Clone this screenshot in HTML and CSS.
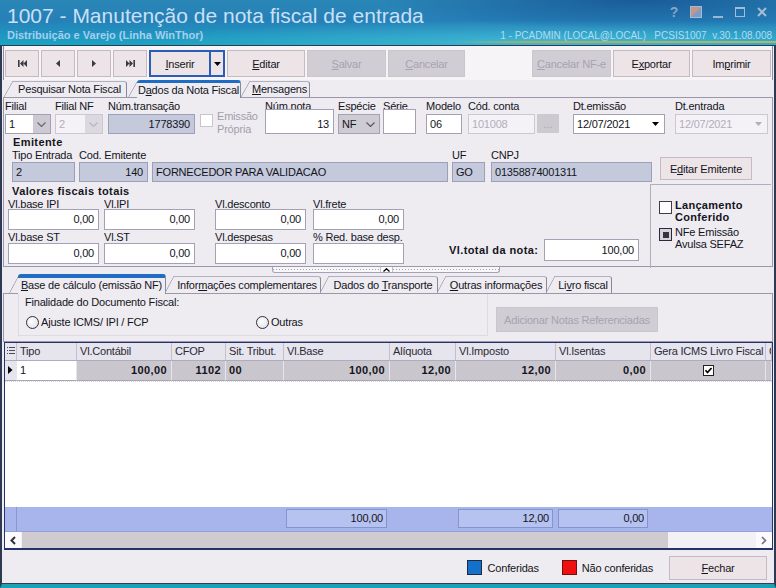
FILE: index.html
```html
<!DOCTYPE html>
<html lang="pt-BR">
<head>
  <meta charset="UTF-8" />
  <title>1007 - Manutenção de nota fiscal de entrada</title>
  <link rel="stylesheet" href="styles.css">
</head>
<body>

<div class="titlebar">
  <div class="tb-left">
    <div class="title">1007 - Manutenção de nota fiscal de entrada</div>
    <div class="subtitle">Distribuição e Varejo (Linha WinThor)</div>
  </div>
  <div class="tb-right">
    <div class="wnd">
      <span class="wnd-help">?</span>
      <svg width="12" height="12" viewBox="0 0 12 12"><rect x="0.5" y="0.5" width="11" height="11" fill="#7d9cc6" stroke="#a6bad2"/><path d="M1 1H11L1 11Z" fill="#c6968c"/></svg>
      <svg width="12" height="12" viewBox="0 0 12 12"><rect x="1" y="10" width="10" height="2" fill="#9cb6ce"/></svg>
      <svg width="12" height="12" viewBox="0 0 12 12"><rect x="1.5" y="1.5" width="9" height="9" fill="none" stroke="#a4bcd4"/><rect x="1" y="1" width="10" height="2" fill="#a4bcd4"/></svg>
      <svg width="12" height="12" viewBox="0 0 12 12"><path d="M2 2L10 10M10 2L2 10" stroke="#a4bcd4" stroke-width="2"/></svg>
    </div>
    <div class="session">1 - PCADMIN (LOCAL@LOCAL) &nbsp; PCSIS1007 &nbsp;v.30.1.08.008</div>
  </div>
</div>

<div class="window">

  <div class="toolbar">
    <div class="btn nav"><svg width="9" height="7" viewBox="0 0 9 7"><rect width="1.6" height="7"/><path d="M5.5 0V7L2 3.5ZM9 0V7L5.5 3.5Z"/></svg></div>
    <div class="btn nav"><svg width="4" height="7" viewBox="0 0 4 7"><path d="M4 0V7L0 3.5Z"/></svg></div>
    <div class="btn nav"><svg width="4" height="7" viewBox="0 0 4 7"><path d="M0 0V7L4 3.5Z"/></svg></div>
    <div class="btn nav"><svg width="9" height="7" viewBox="0 0 9 7"><path d="M0 0V7L3.5 3.5ZM3.5 0V7L7 3.5Z"/><rect x="7.4" width="1.6" height="7"/></svg></div>
    <div class="split">
      <div class="split-main"><u>I</u>nserir</div>
      <div class="split-drop"><svg width="7" height="4" viewBox="0 0 7 4"><path d="M0 0H7L3.5 4Z"/></svg></div>
    </div>
    <div class="btn w-edit"><u>E</u>ditar</div>
    <div class="btn off w-save"><u>S</u>alvar</div>
    <div class="btn off w-cancel"><u>C</u>ancelar</div>
    <div class="spacer"></div>
    <div class="btn off w-cnfe"><u>C</u>ancelar NF-e</div>
    <div class="btn w-exp">E<u>x</u>portar</div>
    <div class="btn w-print">Im<u>p</u>rimir</div>
  </div>

  <div class="tabs tabs-top">
    <div class="tab t-pesq">Pesquisar Nota Fiscal</div>
    <div class="tab active t-dados">D<u>a</u>dos da Nota Fiscal</div>
    <div class="tab t-msg"><u>M</u>ensagens</div>
  </div>

  <div class="panel p-nota">
    <div class="row r-ident">
      <div class="fld f-filial"><span class="lbl">Filial</span>
        <div class="inp sel"><span>1</span><span class="chev"><svg width="9" height="5" viewBox="0 0 9 5"><path d="M0.5 0.5L4.5 4.5L8.5 0.5" fill="none" stroke="currentColor" stroke-width="1.2"/></svg></span></div></div>
      <div class="fld f-filialnf"><span class="lbl">Filial NF</span>
        <div class="inp sel dis"><span>2</span><span class="chev"><svg width="9" height="5" viewBox="0 0 9 5"><path d="M0.5 0.5L4.5 4.5L8.5 0.5" fill="none" stroke="currentColor" stroke-width="1.2"/></svg></span></div></div>
      <div class="fld f-trans"><span class="lbl">Núm.transação</span>
        <div class="inp ro num">1778390</div></div>
      <div class="f-emissao">
        <span class="cb cb-dis"></span>
        <span class="emissao-txt">Emissão<br>Própria</span>
      </div>
      <div class="fld f-nota"><span class="lbl">Núm.nota</span>
        <div class="inp num tall">13</div></div>
      <div class="fld f-especie"><span class="lbl">Espécie</span>
        <div class="inp sel grey"><span>NF</span><span class="chev"><svg width="9" height="5" viewBox="0 0 9 5"><path d="M0.5 0.5L4.5 4.5L8.5 0.5" fill="none" stroke="currentColor" stroke-width="1.2"/></svg></span></div></div>
      <div class="fld f-serie"><span class="lbl">Série</span>
        <div class="inp tall"></div></div>
      <div class="fld f-modelo"><span class="lbl">Modelo</span>
        <div class="inp">06</div></div>
      <div class="fld f-conta"><span class="lbl">Cód. conta</span>
        <div class="inp dis">101008</div></div>
      <div class="f-dots">...</div>
      <div class="fld f-dtemi"><span class="lbl">Dt.emissão</span>
        <div class="inp date"><span>12/07/2021</span><svg width="7" height="4" viewBox="0 0 7 4"><path d="M0 0H7L3.5 4Z"/></svg></div></div>
      <div class="fld f-dtent"><span class="lbl">Dt.entrada</span>
        <div class="inp date dis"><span>12/07/2021</span><svg width="7" height="4" viewBox="0 0 7 4"><path d="M0 0H7L3.5 4Z"/></svg></div></div>
    </div>

    <div class="sec-title emit-title">Emitente</div>
    <div class="row r-emit">
      <div class="fld f-tipo"><span class="lbl">Tipo Entrada</span><div class="inp ro">2</div></div>
      <div class="fld f-cod"><span class="lbl">Cod. Emitente</span><div class="inp ro num">140</div></div>
      <div class="fld f-nome"><span class="lbl"></span><div class="inp ro">FORNECEDOR PARA VALIDACAO</div></div>
      <div class="fld f-uf"><span class="lbl">UF</span><div class="inp ro">GO</div></div>
      <div class="fld f-cnpj"><span class="lbl">CNPJ</span><div class="inp ro">01358874001311</div></div>
      <div class="btn b-emit">E<u>d</u>itar Emitente</div>
    </div>

    <div class="valores">
      <div class="val-left">
        <div class="sec-title val-title">Valores fiscais totais</div>
        <div class="row vrow">
          <div class="fld f-v1"><span class="lbl">Vl.base IPI</span><div class="inp num">0,00</div></div>
          <div class="fld f-v2"><span class="lbl">Vl.IPI</span><div class="inp num">0,00</div></div>
          <div class="fld f-v3"><span class="lbl">Vl.desconto</span><div class="inp num">0,00</div></div>
          <div class="fld f-v4"><span class="lbl">Vl.frete</span><div class="inp num">0,00</div></div>
        </div>
        <div class="row vrow vrow2">
          <div class="fld f-v1"><span class="lbl">Vl.base ST</span><div class="inp num">0,00</div></div>
          <div class="fld f-v2"><span class="lbl">Vl.ST</span><div class="inp num">0,00</div></div>
          <div class="fld f-v3"><span class="lbl">Vl.despesas</span><div class="inp num">0,00</div></div>
          <div class="fld f-v4"><span class="lbl">% Red. base desp.</span><div class="inp num"></div></div>
          <div class="total">
            <span class="total-lbl">Vl.total da nota:</span>
            <div class="inp num total-inp">100,00</div>
          </div>
        </div>
      </div>
      <div class="conf">
        <div class="chk-item bold-item"><span class="cb"></span><span>Lançamento<br>Conferido</span></div>
        <div class="chk-item"><span class="cb cb-mixed"></span><span>NFe Emissão<br>Avulsa SEFAZ</span></div>
      </div>
    </div>
  </div>

  <div class="splitter">
    <div class="grip"><span class="grip-dots"></span><span class="grip-up"><svg width="7" height="4" viewBox="0 0 7 4"><path d="M0.5 3.5L3.5 0.8L6.5 3.5" fill="none" stroke="#000" stroke-width="1.3"/></svg></span><span class="grip-dots"></span></div>
  </div>

  <div class="tabs tabs-low">
    <div class="tab active t-base"><u>B</u>ase de cálculo (emissão NF)</div>
    <div class="tab t-info">Infor<u>m</u>ações complementares</div>
    <div class="tab t-transp">Dados do <u>T</u>ransporte</div>
    <div class="tab t-outras"><u>O</u>utras informações</div>
    <div class="tab t-livro">Li<u>v</u>ro fiscal</div>
  </div>

  <div class="panel p-base">
    <div class="final">
      <div class="final-lbl">Finalidade do Documento Fiscal:</div>
      <div class="radios">
        <span class="radio r-ajuste"><span class="rdot"></span>Ajuste ICMS/ IPI / FCP</span>
        <span class="radio"><span class="rdot"></span>Outras</span>
      </div>
    </div>
    <div class="btn off b-ref">Adicionar Notas Referenciadas</div>
  </div>

  <div class="grid">
    <div class="cols gh">
      <div class="ind"><svg width="8" height="10" viewBox="0 0 8 10" fill="#4a4a5a"><rect y="1" width="1" height="1"/><rect x="2" y="1" width="6" height="1"/><rect y="4" width="1" height="1"/><rect x="2" y="4" width="6" height="1"/><rect y="7" width="1" height="1"/><rect x="2" y="7" width="6" height="1"/></svg></div>
      <div>Tipo</div>
      <div>Vl.Contábil</div>
      <div>CFOP</div>
      <div>Sit. Tribut.</div>
      <div>Vl.Base</div>
      <div>Alíquota</div>
      <div>Vl.Imposto</div>
      <div>Vl.Isentas</div>
      <div>Gera ICMS Livro Fiscal</div>
      <div>C</div>
    </div>
    <div class="cols gr">
      <div class="ind"><svg width="5" height="8" viewBox="0 0 5 8"><path d="M0 0V8L4.5 4Z"/></svg></div>
      <div class="c-tipo">1</div>
      <div>100,00</div>
      <div>1102</div>
      <div class="c-left">00</div>
      <div>100,00</div>
      <div>12,00</div>
      <div>12,00</div>
      <div>0,00</div>
      <div class="c-chk"><svg width="11" height="11" viewBox="0 0 11 11"><rect x="0.5" y="0.5" width="10" height="10" fill="#fff" stroke="#222"/><path d="M2.5 5.3L4.5 7.5L8.5 3" stroke="#000" stroke-width="1.7" fill="none"/></svg></div>
      <div></div>
    </div>
    <div class="gempty"></div>
    <div class="cols gf">
      <div class="ind"></div>
      <div></div><div></div><div></div><div></div>
      <div><div class="tot">100,00</div></div>
      <div></div>
      <div><div class="tot">12,00</div></div>
      <div><div class="tot">0,00</div></div>
      <div></div><div></div>
    </div>
    <div class="gs">
      <div class="sb-btn"><svg width="6" height="9" viewBox="0 0 6 9"><path d="M5 1L1.5 4.5L5 8" stroke="#303040" stroke-width="2" fill="none"/></svg></div>
      <div class="sb-thumb"></div>
      <div class="sb-track"></div>
      <div class="sb-btn"><svg width="6" height="9" viewBox="0 0 6 9"><path d="M1 1L4.5 4.5L1 8" stroke="#707080" stroke-width="1.6" fill="none"/></svg></div>
    </div>
  </div>

  <div class="bottombar">
    <div class="legend"><span class="sq sq-blue"></span>Conferidas</div>
    <div class="legend lg-red"><span class="sq sq-red"></span>Não conferidas</div>
    <div class="btn b-close"><u>F</u>echar</div>
  </div>

</div>

</body>
</html>
```

FILE: styles.css
```css
* { box-sizing: border-box; }
body { margin: 0; width: 776px; height: 588px; overflow: hidden; background: #eeecf1; color: #14141c; font: 11px "Liberation Sans", Arial, sans-serif; letter-spacing: -0.2px; }
u { text-decoration: underline; text-underline-offset: 1px; }
svg { display: block; }

/* title bar */
.titlebar { height: 45px; display: flex; justify-content: space-between; background: radial-gradient(ellipse 260px 30px at 640px 0, rgba(12,56,130,0.55), rgba(12,56,130,0)), radial-gradient(ellipse 420px 22px at 560px 42px, rgba(110,210,235,0.45), rgba(110,210,235,0)), linear-gradient(180deg, #2a86b6 0%, #2680b8 45%, #1f98c0 80%, #1aa4c0 100%); }
.tb-left { padding: 4px 0 0 7px; white-space: nowrap; }
.title { font-size: 21px; line-height: 24px; letter-spacing: 0; color: #c9e0f5; }
.subtitle { margin-top: 1px; font-weight: bold; line-height: 13px; letter-spacing: 0; color: #a9cdf0; }
.tb-right { width: 328px; display: flex; flex-direction: column; align-items: flex-end; }
.wnd { display: flex; align-items: center; gap: 10px; height: 14px; margin: 5px 8px 0 0; }
.wnd-help { width: 12px; font-size: 14px; font-weight: bold; line-height: 14px; text-align: center; color: #86a6c4; }
.session { width: 100%; height: 14px; margin-top: 10px; padding-right: 4px; text-align: right; font-size: 10px; line-height: 13px; letter-spacing: 0; color: #b2dbf0; white-space: nowrap; background: linear-gradient(to right, rgba(170,176,96,0), #a8ae64 25%, #b4b46c) left bottom / 100% 2px no-repeat; }

/* window */
.window { height: 543px; border: 2px solid #2e3a52; border-top-width: 1px; border-bottom: 4px solid #1ba2b6; display: flex; flex-direction: column; }

.toolbar { flex: none; height: 34px; margin: 0 1px; padding: 4px 1px 0; display: flex; gap: 2px; background: #f6f4f6; border-left: 1px solid #8e8c9e; border-right: 1px solid #8e8c9e; }
.btn { height: 27px; display: flex; align-items: center; justify-content: center; border: 1px solid #c6bac2; background: #ede4e7; white-space: nowrap; }
.btn.off { background: #d1cdd5; border-color: #cac6ce; color: #a7a3af; }
.nav { width: 34px; color: #3a3a44; fill: currentColor; }
.nav svg { fill: #3a3a44; }
.split { width: 76px; height: 27px; display: flex; border: 2px solid #2a5cb8; background: #ede4e7; }
.split-main { flex: 1; display: flex; align-items: center; justify-content: center; border-right: 2px solid #2a5cb8; }
.split-drop { width: 12px; display: flex; align-items: center; justify-content: center; }
.w-edit { width: 78px; }
.w-save { width: 79px; }
.w-cancel { width: 77px; }
.w-cnfe { width: 79px; }
.w-exp { width: 77px; }
.w-print { width: 79px; }
.spacer { flex: 1; }

/* tabs */
.tabs { flex: none; display: flex; align-items: flex-end; margin: 0 1px; position: relative; z-index: 1; }
.tabs-top { height: 17px; }
.tabs-low { height: 19px; }
.tab { position: relative; height: 16px; margin-left: 9px; border-top: 1px solid #b2b0c0; border-right: 1px solid #8a889a; border-top-right-radius: 3px; text-align: center; line-height: 15px; white-space: nowrap; }
.tab::before { content: ""; position: absolute; left: -9px; top: -1px; bottom: 0; width: 9px; background: linear-gradient(to bottom right, rgba(0,0,0,0) calc(50% - 0.7px), #a2a0b2 50%, rgba(0,0,0,0) calc(50% + 0.7px)); }
.tab.active { height: 18px; margin-bottom: -1px; background: #eeecf1; border-top: 3px solid #1f6cc4; border-radius: 3px 3px 0 0; }
.tabs-low .tab { height: 17px; line-height: 16px; }
.tabs-low .tab.active { height: 20px; border-top-width: 4px; line-height: 15px; }
.t-pesq { margin-left: 10px; width: 114px; }
.t-dados { margin-left: 10px; width: 104px; }
.t-msg { width: 60px; }
.t-base { margin-left: 15px; width: 148px; }
.t-info { margin-left: 8px; width: 147px; }
.t-transp { margin-left: 8px; width: 109px; }
.t-outras { margin-left: 8px; width: 101px; }
.t-livro { margin-left: 8px; width: 57px; }

/* panels and fields */
.panel { flex: none; margin: 0 1px; border: 1px solid #9a98aa; }
.p-nota { height: 170px; padding-top: 1px; }
.row { display: flex; align-items: flex-start; }
.fld { display: flex; flex-direction: column; }
.lbl { display: block; height: 15px; line-height: 14px; white-space: nowrap; }
.inp { height: 20px; border: 1px solid #a3a1b3; background: #fff; padding: 0 3px; line-height: 18px; white-space: nowrap; overflow: hidden; }
.num { text-align: right; padding-right: 4px; }
.ro { background: #c5c9dc; border-color: #9c9fb8; }
.dis { background: #f4f2f6; border-color: #cac8d2; color: #b2aebc; }
.grey { background: #cfcbd3; }
.tall { height: 25px; margin-top: -5px; line-height: 28px; }
.sel { display: flex; justify-content: space-between; padding-right: 0; }
.sel .chev { width: 17px; display: flex; align-items: center; justify-content: center; color: #6a6878; background: #cdc9d3; }
.sel.dis .chev { background: #dcd8e0; color: #b8b4c0; }
.sel.grey .chev { background: none; color: #5a5868; }
.date { display: flex; justify-content: space-between; align-items: center; padding-right: 5px; }
.date.dis svg { fill: #b2aebc; }

.f-filial { margin-left: 1px; width: 46px; }
.f-filialnf { margin-left: 4px; width: 48px; }
.f-trans { margin-left: 5px; width: 87px; }
.f-emissao { margin: 11px 0 0 5px; width: 54px; display: flex; gap: 4px; }
.emissao-txt { line-height: 13px; color: #a29eae; }
.f-nota { margin-left: 11px; width: 69px; }
.f-especie { margin-left: 4px; width: 42px; }
.f-serie { margin-left: 3px; width: 33px; }
.f-modelo { margin-left: 10px; width: 36px; }
.f-conta { margin-left: 6px; width: 67px; }
.f-dots { margin: 15px 0 0 2px; width: 22px; height: 19px; background: #cdc9d1; color: #aaa6b2; text-align: center; line-height: 20px; letter-spacing: 0; }
.f-dtemi { margin-left: 14px; width: 92px; }
.f-dtent { margin-left: 10px; width: 93px; }

.cb { flex: none; width: 13px; height: 13px; margin-top: 3px; border: 1px solid #3c3c4c; background: #fff; }
.cb-dis { margin-top: 4px; border-color: #c8c4d0; }
.cb-mixed { background: #d6d4da; border-color: #2a2a3a; display: flex; align-items: center; justify-content: center; }
.cb-mixed::after { content: ""; width: 6px; height: 6px; background: #34343c; }

.sec-title { font-weight: bold; letter-spacing: 0.4px; white-space: nowrap; }
.emit-title { margin: 1px 0 0 9px; line-height: 11px; }
.r-emit .lbl { height: 14px; }
.f-tipo { margin-left: 8px; width: 63px; }
.f-cod { margin-left: 4px; width: 69px; }
.f-nome { margin-left: 4px; width: 296px; }
.f-uf { margin-left: 4px; width: 33px; }
.f-cnpj { margin-left: 6px; width: 161px; }
.b-emit { margin: 9px 0 0 8px; width: 92px; height: 23px; }

.valores { display: flex; height: 84px; margin-top: 2px; }
.val-left { flex: 1; padding-top: 1px; }
.val-title { margin-left: 8px; line-height: 12px; }
.vrow .lbl { height: 12px; }
.vrow .inp { height: 21px; line-height: 19px; }
.vrow2 { align-items: flex-end; }
.vrow2 .lbl { height: 13px; }
.f-v1 { margin-left: 4px; width: 91px; }
.f-v2 { margin-left: 5px; width: 91px; }
.f-v3 { margin-left: 20px; width: 91px; }
.f-v4 { margin-left: 7px; width: 91px; }
.total { display: flex; align-items: center; margin: 0 0 3px 45px; }
.total-lbl { width: 89px; font-weight: bold; letter-spacing: 0.4px; white-space: nowrap; }
.vrow .total-inp { margin-left: 6px; width: 95px; height: 22px; line-height: 20px; }
.conf { width: 121px; margin-right: 1px; padding: 14px 0 0 8px; border-left: 1px solid #b0aec0; border-top: 1px solid #b0aec0; }
.chk-item { display: flex; gap: 3px; line-height: 12px; }
.chk-item + .chk-item { margin-top: 3px; }
.chk-item .cb { margin-top: 2px; }
.bold-item { font-weight: bold; letter-spacing: 0.3px; }

/* splitter */
.splitter { flex: none; height: 7px; display: flex; justify-content: center; }
.grip { width: 228px; height: 6px; margin-left: -4px; display: flex; border: 1px solid #a4a2b4; border-top: none; border-radius: 0 0 3px 3px; background: #f7f6f9; }
.grip-dots { flex: 1; background: repeating-linear-gradient(to right, #a09eb0 0 1px, rgba(0,0,0,0) 1px 3px) 0 2px / 100% 1px no-repeat; }
.grip-up { width: 13px; display: flex; align-items: center; justify-content: center; border-left: 1px solid #c4c2d0; border-right: 1px solid #c4c2d0; background: #fff; }

/* lower panel */
.p-base { height: 49px; display: flex; align-items: flex-start; }
.final { width: 470px; height: 42px; margin-left: 14px; padding: 2px 0 0 6px; border: 1px solid #dcdae2; border-top: none; }
.final-lbl { line-height: 13px; }
.radios { display: flex; margin: 6px 0 0 1px; line-height: 14px; }
.radio { display: inline-flex; align-items: center; gap: 2px; }
.r-ajuste { width: 230px; }
.rdot { width: 13px; height: 13px; border: 1px solid #2e2e40; border-radius: 50%; background: radial-gradient(circle at 40% 40%, #fff, #dcdae0); }
.b-ref { width: 162px; height: 25px; margin: 13px 0 0 8px; }

/* grid */
.grid { flex: none; height: 208px; margin: 0 1px 0 2px; border: 1px solid #24346a; border-bottom-width: 2px; background: #fff; display: flex; flex-direction: column; }
.cols { display: grid; grid-template-columns: 12px 60px 95px 54px 58px 106px 66px 100px 95px 115px 1fr; }
.cols > div { overflow: hidden; white-space: nowrap; }
.gh { height: 18px; background: #e6e4ec; border-bottom: 1px solid #aeacbe; color: #2a2a36; }
.gh > div { border-right: 1px solid #c2c0ce; padding-left: 3px; line-height: 17px; }
.gh > .ind { padding: 3px 0 0 2px; }
.gr { height: 20px; }
.gr > div { background: #c9c7cd; border-right: 1px solid #e8e6ec; border-bottom: 1px solid #a8a6b2; padding-right: 4px; text-align: right; font-weight: bold; letter-spacing: 0.4px; line-height: 19px; }
.gr > .ind { background: #e6e4ec; padding: 5px 0 0 3px; }
.gr > .c-tipo { background: #fff; text-align: left; padding-left: 3px; font-weight: normal; letter-spacing: -0.2px; }
.gr > .c-left { text-align: left; padding-left: 3px; }
.gr > .c-chk { display: flex; justify-content: center; align-items: center; padding: 0; }
.gempty { flex: 1; border-top: 1px dotted #d8d6e0; }
.gf { height: 24px; background: #a7b5ec; }
.gf > .ind { border-right: 1px solid #8a98cc; }
.tot { height: 19px; margin: 2px 3px 0 2px; border: 1px solid #8694cc; background: #b6c2f0; text-align: right; padding-right: 3px; line-height: 17px; }
.gs { height: 17px; display: flex; background: #f3f1f5; border-top: 1px solid #95a2d6; }
.sb-btn { width: 16px; display: flex; align-items: center; justify-content: center; background: #fbfafc; }
.sb-thumb { width: 646px; margin-left: 1px; background: #cfcbd1; }
.sb-track { flex: 1; }

/* bottom */
.bottombar { flex: 1; display: flex; align-items: center; justify-content: flex-end; padding: 2px 7px 0 0; border-bottom: 1px solid #3a3c52; }
.legend { display: flex; align-items: center; gap: 6px; }
.lg-red { gap: 5px; margin: 0 16px 0 23px; }
.sq { width: 15px; height: 15px; border: 1px solid #1a2a4a; }
.sq-blue { background: #1470c8; }
.sq-red { background: #f01010; border-color: #701010; }
.b-close { width: 98px; height: 24px; }
```
